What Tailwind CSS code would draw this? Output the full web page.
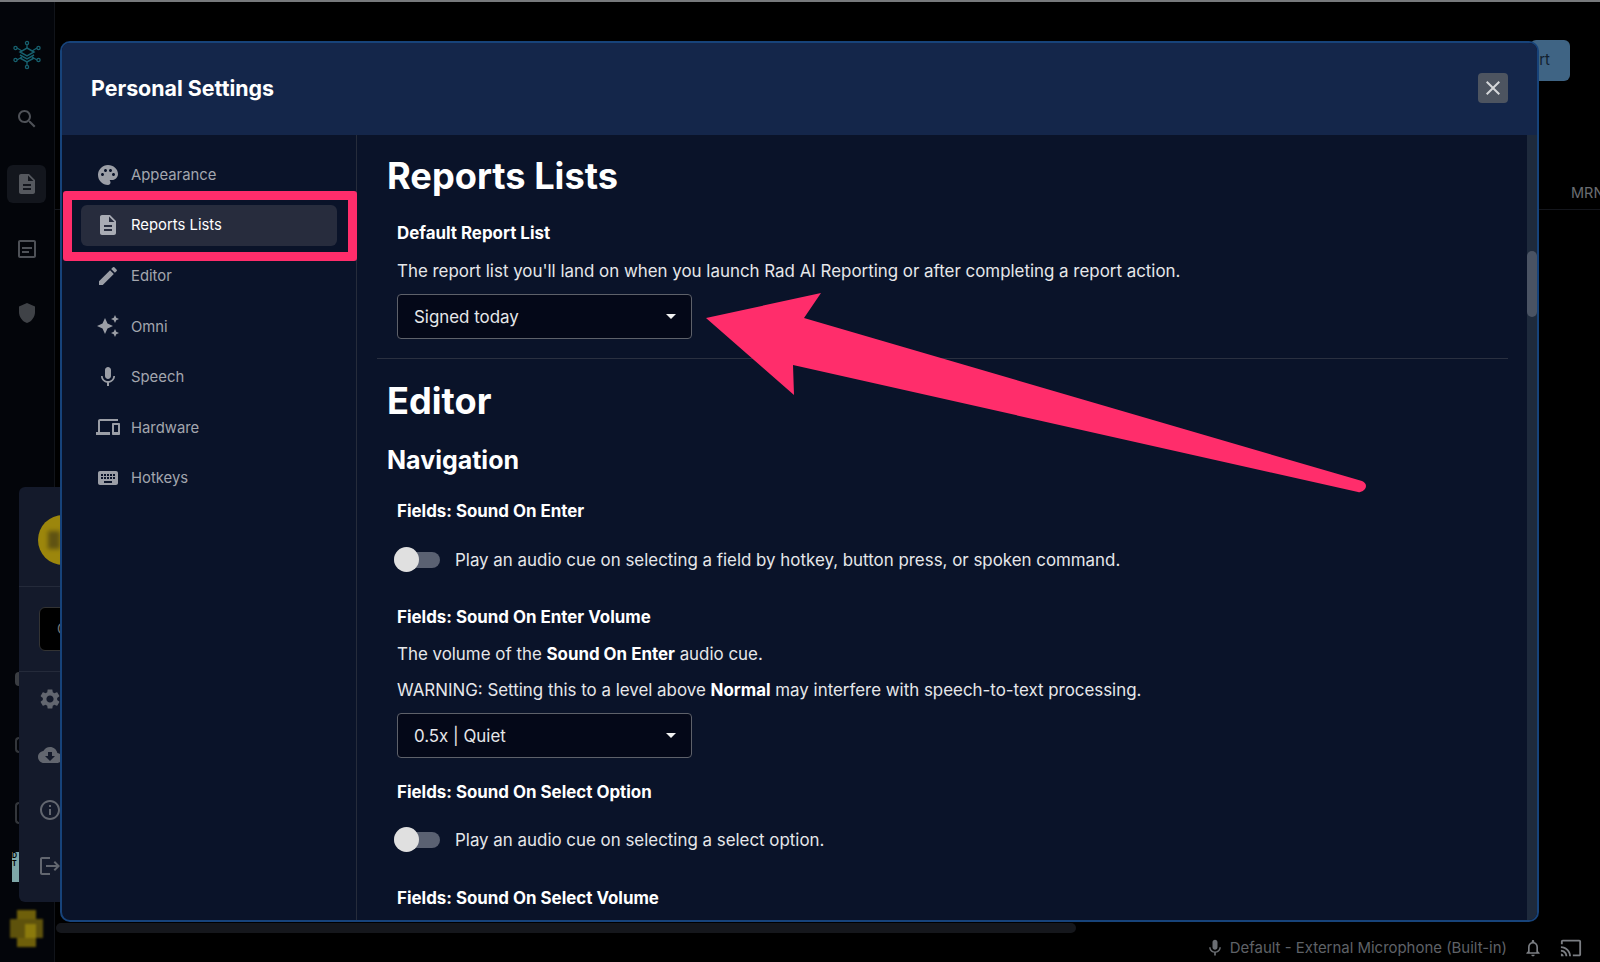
<!DOCTYPE html>
<html lang="en">
<head>
<meta charset="utf-8">
<title>Personal Settings</title>
<script src="https://cdn.jsdelivr.net/npm/@tailwindcss/browser@4"></script>
</head>
<body class="bg-black">
<div class="relative w-[1600px] h-[962px] overflow-hidden bg-black border-t-2 border-[#77797c] font-[Inter,sans-serif] text-white">

  <!-- background app -->
  <div class="flex h-full">
    <aside class="w-[55px] shrink-0 border-r border-[#11141a] bg-[#03050a] flex flex-col items-center pt-[38px]">
      <svg class="w-[28px] h-[30px]" viewBox="0 0 28 30" fill="none" stroke="#17606e" stroke-width="1.3"><path d="M14 4v5M4 8l5 3M24 8l-5 3M4 20l5-3M24 20l-5-3M14 26v-5"/><circle cx="14" cy="3" r="1.6"/><circle cx="14" cy="27" r="1.6"/><circle cx="2.5" cy="8" r="1.6"/><circle cx="25.5" cy="8" r="1.6"/><circle cx="2.5" cy="20" r="1.6"/><circle cx="25.5" cy="20" r="1.6"/><path d="M14 8l7 4-7 4-7-4zM7 15l7 4 7-4M7 18l7 4 7-4" stroke-width="1.5"/></svg>
      <svg class="w-[24px] h-[24px] mt-[37px] -ml-[1px]" viewBox="0 0 24 24" fill="#4e5157"><path d="M15.5 14h-.79l-.28-.27C15.41 12.59 16 11.11 16 9.5 16 5.91 13.09 3 9.5 3S3 5.91 3 9.5 5.91 16 9.5 16c1.61 0 3.09-.59 4.23-1.57l.27.28v.79l5 4.99L20.49 19l-4.99-5zm-6 0C7.01 14 5 11.99 5 9.5S7.01 5 9.5 5 14 7.01 14 9.5 11.99 14 9.5 14z"/></svg>
      <div class="mt-[34px] -ml-[1px] w-[39px] h-[38px] rounded-md bg-[#13161d] flex items-center justify-center">
        <svg class="w-[24px] h-[24px]" viewBox="0 0 24 24" fill="#55585e"><path d="M14 2H6c-1.1 0-1.99.9-1.99 2L4 20c0 1.1.89 2 1.99 2H18c1.1 0 2-.9 2-2V8l-6-6zm2 16H8v-2h8v2zm0-4H8v-2h8v2zm-3-5V3.5L18.5 9H13z"/></svg>
      </div>
      <svg class="w-[24px] h-[24px] mt-[34px] -ml-[1px]" viewBox="0 0 24 24" fill="#4e5157"><path d="M19 5v14H5V5h14m0-2H5c-1.1 0-2 .9-2 2v14c0 1.1.9 2 2 2h14c1.1 0 2-.9 2-2V5c0-1.1-.9-2-2-2z"/><path d="M14 16H7v-2h7v2zm3-4H7v-2h10v2z"/></svg>
      <svg class="w-[24px] h-[24px] mt-[40px] -ml-[1px]" viewBox="0 0 24 24" fill="#3f4247"><path d="M12 2L4 5.5v5.5c0 5 3.4 9.6 8 11 4.6-1.4 8-6 8-11V5.5L12 2z"/></svg>
    </aside>
    <main class="flex-1 flex flex-col">
      <div class="flex justify-end pt-[38px] pr-[30px]">
        <div class="w-[40px] h-[41px] rounded-md bg-[#3f6484] flex items-center justify-end pr-[20px] text-[15px] text-[#12202e]">rt</div>
      </div>
      <div class="mt-[101px] h-[28px] pt-[1px] border-b border-[#14161c] text-[14.5px] text-[#6a6d72] leading-[20px] whitespace-nowrap flex justify-end overflow-hidden"><span class="w-[29px] text-left">MRN</span></div>
      <div class="flex-1"></div>
      <div class="mx-[1px] h-[10px] w-[1020px] rounded-full bg-[#15171c]"></div>
      <div class="h-[29px] pt-[1px] flex items-center justify-end pr-[18px] text-[14.95px] text-[#5f6267]">
        <svg class="w-[20px] h-[20px] mr-[5px]" viewBox="0 0 24 24" fill="#6b6e73"><path d="M12 14c1.66 0 2.99-1.34 2.99-3L15 5c0-1.66-1.34-3-3-3S9 3.34 9 5v6c0 1.66 1.34 3 3 3zm5.3-3c0 3-2.54 5.1-5.3 5.1S6.7 14 6.7 11H5c0 3.41 2.72 6.23 6 6.72V21h2v-3.28c3.28-.48 6-3.3 6-6.72h-1.7z"/></svg>
        <span class="mr-[16px]">Default - External Microphone (Built-in)</span>
        <svg class="w-[20px] h-[20px] mr-[17px]" viewBox="0 0 24 24" fill="#7b7e83"><path d="M12 22c1.1 0 2-.9 2-2h-4c0 1.1.9 2 2 2zm6-6v-5c0-3.07-1.63-5.64-4.5-6.32V4c0-.83-.67-1.5-1.5-1.5s-1.5.67-1.5 1.5v.68C7.64 5.36 6 7.92 6 11v5l-2 2v1h16v-1l-2-2zm-2 1H8v-6c0-2.48 1.51-4.5 4-4.5s4 2.02 4 4.5v6z"/></svg>
        <svg class="w-[22px] h-[22px]" viewBox="0 0 24 24" fill="#7b7e83"><path d="M21 3H3c-1.1 0-2 .9-2 2v3h2V5h18v14h-7v2h7c1.1 0 2-.9 2-2V5c0-1.1-.9-2-2-2zM1 18v3h3c0-1.66-1.34-3-3-3zm0-4v2c2.76 0 5 2.24 5 5h2c0-3.87-3.13-7-7-7zm0-4v2c4.97 0 9 4.03 9 9h2c0-6.08-4.93-11-11-11z"/></svg>
      </div>
    </main>
  </div>

  <!-- slivers of rail icons peeking out from behind the popover -->
  <div class="absolute left-[15px] top-[670px] w-[4px] h-[14px] rounded-l bg-[#3a3d42]"></div>
  <div class="absolute left-[15px] top-[735px] w-[4px] h-[16px] rounded-l-full border-2 border-r-0 border-[#33363b]"></div>
  <div class="absolute left-[15px] top-[800px] w-[4px] h-[22px] rounded-l border-2 border-r-0 border-[#33363b]"></div>

  <!-- user menu popover behind the modal -->
  <div class="absolute left-[19px] top-[485px] w-[60px] h-[415px] rounded-md bg-[#141a2b] flex flex-col overflow-hidden">
    <div class="h-[100px] border-b border-[#242a3a] pl-[19px] pt-[28px]"><div class="w-[50px] h-[50px] rounded-full bg-[#9c860c] flex items-center justify-start pl-[10px]"><div class="w-[12px] h-[18px] bg-[#5f5212] blur-[2px]"></div></div></div>
    <div class="h-[85px] border-b border-[#242a3a] pl-[20px] pt-[20px]"><div class="w-[30px] h-[44px] rounded-md bg-black border border-[#333] pl-[17px] pt-[13px] text-[14px] leading-[16px] text-[#777]">C</div></div>
    <div class="flex flex-col pl-[19px] pt-[15px] gap-[31.6px]">
      <svg class="w-[24px] h-[24px]" viewBox="0 0 24 24" fill="#62666f"><path d="M19.14 12.94c.04-.3.06-.61.06-.94 0-.32-.02-.64-.07-.94l2.03-1.58c.18-.14.23-.41.12-.61l-1.92-3.32c-.12-.22-.37-.29-.59-.22l-2.39.96c-.5-.38-1.03-.7-1.62-.94l-.36-2.54c-.04-.24-.24-.41-.48-.41h-3.84c-.24 0-.43.17-.47.41l-.36 2.54c-.59.24-1.13.57-1.62.94l-2.39-.96c-.22-.08-.47 0-.59.22L2.74 8.87c-.12.21-.08.47.12.61l2.03 1.58c-.05.3-.09.63-.09.94s.02.64.07.94l-2.03 1.58c-.18.14-.23.41-.12.61l1.92 3.32c.12.22.37.29.59.22l2.39-.96c.5.38 1.03.7 1.62.94l.36 2.54c.05.24.24.41.48.41h3.84c.24 0 .44-.17.47-.41l.36-2.54c.59-.24 1.13-.56 1.62-.94l2.39.96c.22.08.47 0 .59-.22l1.92-3.32c.12-.22.07-.47-.12-.61l-2.01-1.58zM12 15.6c-1.98 0-3.6-1.62-3.6-3.6s1.62-3.6 3.6-3.6 3.6 1.62 3.6 3.6-1.62 3.6-3.6 3.6z"/></svg>
      <svg class="w-[24px] h-[24px]" viewBox="0 0 24 24" fill="#62666f"><path d="M19.35 10.04C18.67 6.59 15.64 4 12 4 9.11 4 6.6 5.64 5.35 8.04 2.34 8.36 0 10.91 0 14c0 3.31 2.69 6 6 6h13c2.76 0 5-2.24 5-5 0-2.64-2.05-4.78-4.65-4.96zM17 13l-5 5-5-5h3V9h4v4h3z"/></svg>
      <svg class="w-[24px] h-[24px]" viewBox="0 0 24 24" fill="#62666f"><path d="M11 7h2v2h-2zm0 4h2v6h-2zm1-9C6.48 2 2 6.48 2 12s4.48 10 10 10 10-4.48 10-10S17.52 2 12 2zm0 18c-4.41 0-8-3.59-8-8s3.59-8 8-8 8 3.59 8 8-3.59 8-8 8z"/></svg>
      <svg class="w-[24px] h-[24px]" viewBox="0 0 24 24" fill="#62666f"><path d="M17 7l-1.41 1.41L18.17 11H8v2h10.17l-2.58 2.58L17 17l5-5zM4 5h8V3H4c-1.1 0-2 .9-2 2v14c0 1.1.9 2 2 2h8v-2H4V5z"/></svg>
    </div>
  </div>
  <div class="absolute left-[12px] top-[850px] w-[7px] h-[30px] bg-[#7ea7a8] overflow-hidden text-[7px] leading-[8px] font-bold text-black">D<br>T</div>
  <svg class="absolute left-[10px] top-[908px] w-[33px] h-[37px] blur-[1px]" viewBox="0 0 33 37"><rect x="7" y="0" width="19" height="37" fill="#6e5f0a"/><rect x="0" y="9" width="33" height="19" fill="#5e520c"/><rect x="15" y="14" width="11" height="14" fill="#8b7a0c"/></svg>

  <!-- modal -->
  <section class="absolute left-[60px] top-[39px] w-[1479px] h-[881px] rounded-[10px] border-2 border-[#17437a] bg-[#0a1329] overflow-hidden flex flex-col">
    <header class="h-[92px] shrink-0 bg-[#14264a] flex items-center justify-between pl-[29px] pr-[29px] pb-[2px]">
      <h2 class="text-[21.4px] font-bold leading-[28px]">Personal Settings</h2>
      <button class="w-[30px] h-[30px] rounded bg-[#4d5460] flex items-center justify-center">
        <svg class="w-[24px] h-[24px]" viewBox="0 0 24 24" fill="#d4d6d9"><path d="M19 6.41L17.59 5 12 10.59 6.41 5 5 6.41 10.59 12 5 17.59 6.41 19 12 13.41 17.59 19 19 17.59 13.41 12z"/></svg>
      </button>
    </header>
    <div class="flex-1 flex min-h-0">
      <nav class="w-[295px] shrink-0 border-r border-[#262c3b] pl-[19px] pr-[19px] pt-[19px] flex flex-col gap-[9.6px] text-[14.85px] text-[#a3a6ae]">
        <a class="h-[41px] flex items-center pl-[15px] gap-[11px] rounded-md">
          <svg class="w-[24px] h-[24px]" viewBox="0 0 24 24" fill="#9b9ea6"><path d="M12 2C6.49 2 2 6.49 2 12s4.49 10 10 10c1.38 0 2.5-1.12 2.5-2.5 0-.61-.23-1.2-.64-1.67-.08-.1-.13-.21-.13-.33 0-.28.22-.5.5-.5H16c3.31 0 6-2.69 6-6 0-4.96-4.49-9-10-9zm5.5 11c-.83 0-1.5-.67-1.5-1.5s.67-1.5 1.5-1.5 1.5.67 1.5 1.5-.67 1.5-1.5 1.5zm-3-4c-.83 0-1.5-.67-1.5-1.5S13.67 6 14.5 6s1.5.67 1.5 1.5S15.33 9 14.5 9zM5 11.5c0-.83.67-1.5 1.5-1.5s1.5.67 1.5 1.5S7.33 13 6.5 13 5 12.33 5 11.5zm6-4c0 .83-.67 1.5-1.5 1.5S8 8.33 8 7.5 8.67 6 9.5 6s1.5.67 1.5 1.5z"/></svg>
          <span class="pt-[1px]">Appearance</span>
        </a>
        <a class="h-[41px] flex items-center pl-[15px] gap-[11px] rounded-md bg-[#272c3d] text-white">
          <svg class="w-[24px] h-[24px]" viewBox="0 0 24 24" fill="#a9acb4"><path d="M14 2H6c-1.1 0-1.99.9-1.99 2L4 20c0 1.1.89 2 1.99 2H18c1.1 0 2-.9 2-2V8l-6-6zm2 16H8v-2h8v2zm0-4H8v-2h8v2zm-3-5V3.5L18.5 9H13z"/></svg>
          <span class="pt-[1px]">Reports Lists</span>
        </a>
        <a class="h-[41px] flex items-center pl-[15px] gap-[11px] rounded-md">
          <svg class="w-[24px] h-[24px]" viewBox="0 0 24 24" fill="#9b9ea6"><path d="M3 17.25V21h3.75L17.81 9.94l-3.75-3.75L3 17.25zM20.71 7.04c.39-.39.39-1.02 0-1.41l-2.34-2.34a.9959.9959 0 0 0-1.41 0l-1.83 1.83 3.75 3.75 1.83-1.83z"/></svg>
          <span class="pt-[1px]">Editor</span>
        </a>
        <a class="h-[41px] flex items-center pl-[15px] gap-[11px] rounded-md">
          <svg class="w-[24px] h-[24px]" viewBox="0 0 24 24" fill="#9b9ea6"><path d="M19 9l1.25-2.75L23 5l-2.75-1.25L19 1l-1.25 2.75L15 5l2.75 1.25L19 9zm-7.5.5L9 4 6.5 9.5 1 12l5.5 2.5L9 20l2.5-5.5L17 12l-5.5-2.5zM19 15l-1.25 2.75L15 19l2.75 1.25L19 23l1.25-2.75L23 19l-2.75-1.25L19 15z"/></svg>
          <span class="pt-[1px]">Omni</span>
        </a>
        <a class="h-[41px] flex items-center pl-[15px] gap-[11px] rounded-md">
          <svg class="w-[24px] h-[24px]" viewBox="0 0 24 24" fill="#9b9ea6"><path d="M12 14c1.66 0 2.99-1.34 2.99-3L15 5c0-1.66-1.34-3-3-3S9 3.34 9 5v6c0 1.66 1.34 3 3 3zm5.3-3c0 3-2.54 5.1-5.3 5.1S6.7 14 6.7 11H5c0 3.41 2.72 6.23 6 6.72V21h2v-3.28c3.28-.48 6-3.3 6-6.72h-1.7z"/></svg>
          <span class="pt-[1px]">Speech</span>
        </a>
        <a class="h-[41px] flex items-center pl-[15px] gap-[11px] rounded-md">
          <svg class="w-[24px] h-[24px]" viewBox="0 0 24 24" fill="#9b9ea6"><path d="M4 6h18V4H4c-1.1 0-2 .9-2 2v11H0v3h14v-3H4V6zm19 2h-6c-.55 0-1 .45-1 1v10c0 .55.45 1 1 1h6c.55 0 1-.45 1-1V9c0-.55-.45-1-1-1zm-1 9h-4v-7h4v7z"/></svg>
          <span class="pt-[1px]">Hardware</span>
        </a>
        <a class="h-[41px] flex items-center pl-[15px] gap-[11px] rounded-md">
          <svg class="w-[24px] h-[24px]" viewBox="0 0 24 24" fill="#9b9ea6"><path d="M20 5H4c-1.1 0-1.99.9-1.99 2L2 17c0 1.1.9 2 2 2h16c1.1 0 2-.9 2-2V7c0-1.1-.9-2-2-2zm-9 3h2v2h-2V8zm0 3h2v2h-2v-2zM8 8h2v2H8V8zm0 3h2v2H8v-2zm-1 2H5v-2h2v2zm0-3H5V8h2v2zm9 7H8v-2h8v2zm0-4h-2v-2h2v2zm0-3h-2V8h2v2zm3 3h-2v-2h2v2zm0-3h-2V8h2v2z"/></svg>
          <span class="pt-[1px]">Hotkeys</span>
        </a>
      </nav>
      <div class="flex-1 min-w-0 overflow-hidden pl-[20px] pr-[19px] pt-[19px] text-[16.9px] leading-[24px] text-[#e6e7ea]">
        <h1 class="pl-[10px] text-[36.2px] leading-[44px] font-bold text-white">Reports Lists</h1>
        <p class="pl-[20px] mt-[23px] font-bold text-white">Default Report List</p>
        <p class="pl-[20px] mt-[14px]">The report list you'll land on when you launch Rad AI Reporting or after completing a report action.</p>
        <div class="ml-[20px] mt-[11px] w-[295px] h-[45px] rounded bg-[#040818] border border-[#5e616a] flex items-center justify-between pl-[16px] pr-[15px]">
          <span>Signed today</span>
          <svg class="w-[10px] h-[5px]" viewBox="0 0 10 5" fill="#f2f2f2"><path d="M0 0h10L5 5z"/></svg>
        </div>
        <div class="mt-[19px] h-px bg-[#2a3040]"></div>
        <h1 class="pl-[10px] mt-[20px] text-[36.2px] leading-[44px] font-bold text-white">Editor</h1>
        <h3 class="pl-[10px] mt-[19px] text-[25px] leading-[36px] font-bold text-white">Navigation</h3>
        <p class="pl-[20px] mt-[21px] font-bold text-white">Fields: Sound On Enter</p>
        <div class="mt-[25px] pl-[17px] flex items-center gap-[15px]">
          <span class="relative w-[46px] h-[16px] rounded-full bg-[#5a6172]"><span class="absolute left-0 -top-[5px] w-[25px] h-[25px] rounded-full bg-[#e0e0e0]"></span></span>
          <span>Play an audio cue on selecting a field by hotkey, button press, or spoken command.</span>
        </div>
        <p class="pl-[20px] mt-[33px] font-bold text-white">Fields: Sound On Enter Volume</p>
        <p class="pl-[20px] mt-[13px]">The volume of the <b class="text-white">Sound On Enter</b> audio cue.</p>
        <p class="pl-[20px] mt-[12px]">WARNING: Setting this to a level above <b class="text-white">Normal</b> may interfere with speech-to-text processing.</p>
        <div class="ml-[20px] mt-[11px] w-[295px] h-[45px] rounded bg-[#040818] border border-[#5e616a] flex items-center justify-between pl-[16px] pr-[15px]">
          <span>0.5x | Quiet</span>
          <svg class="w-[10px] h-[5px]" viewBox="0 0 10 5" fill="#f2f2f2"><path d="M0 0h10L5 5z"/></svg>
        </div>
        <p class="pl-[20px] mt-[22px] font-bold text-white">Fields: Sound On Select Option</p>
        <div class="mt-[24px] pl-[17px] flex items-center gap-[15px]">
          <span class="relative w-[46px] h-[16px] rounded-full bg-[#5a6172]"><span class="absolute left-0 -top-[5px] w-[25px] h-[25px] rounded-full bg-[#e0e0e0]"></span></span>
          <span>Play an audio cue on selecting a select option.</span>
        </div>
        <p class="pl-[20px] mt-[34px] font-bold text-white">Fields: Sound On Select Volume</p>
      </div>
      <div class="w-[10px] shrink-0 bg-[#1e2a3c] pt-[116px]">
        <div class="h-[66px] rounded-full bg-[#4a5363]"></div>
      </div>
    </div>
  </section>

  <!-- annotation: highlight box -->
  <div class="absolute left-[63px] top-[189px] w-[294px] h-[70px] rounded-[3px] border-[9px] border-[#ff2d6b]"></div>
  <!-- annotation: arrow -->
  <svg class="absolute left-0 top-[-2px] w-[1600px] h-[962px] pointer-events-none" viewBox="0 0 1600 962">
    <path d="M706 318 L821 293 L804 318 L1362 481 Q1368 484 1365 489 Q1362 493 1358 492 L793 365 L794 395 Z" fill="#ff2d6b"/>
  </svg>
</div>
</body>
</html>
